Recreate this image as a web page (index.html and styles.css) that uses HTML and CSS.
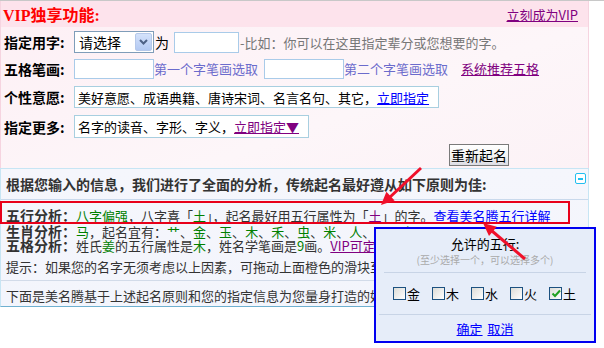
FILE: index.html
```html
<!DOCTYPE html>
<html lang="zh-CN">
  <head>
    <meta charset="UTF-8" />
    <title>VIP独享功能</title>
    <link rel="stylesheet" href="styles.css">
  </head>
  <body>
    <div class="topline"></div>
    <div class="page">
      <div class="vip">
        <div class="vip-head">
          <span class="vip-title">VIP独享功能:</span>
          <a class="purple" href="#">立刻成为VIP</a>
        </div>
        <div class="vip-body">
          <div class="row r1">
            <span class="lbl">指定用字:</span>
            <div class="sel">
              <span>请选择</span>
              <span class="sel-btn">
                <svg width="9" height="6" viewBox="0 0 9 6"><path d="M1 1l3.5 3.5L8 1" fill="none" stroke="#4d6185" stroke-width="2"/></svg>
              </span>
            </div>
            <span class="wei">为</span>
            <span class="inp w64"></span>
            <span class="hint">-比如：你可以在这里指定辈分或您想要的字。</span>
          </div>
          <div class="row r2">
            <span class="lbl">五格笔画:</span>
            <span class="inp w80"></span>
            <span class="blue-tip">第一个字笔画选取</span>
            <span class="inp w80 gap6"></span>
            <span class="blue-tip">第二个字笔画选取</span>
            <a class="purple gap13" href="#">系统推荐五格</a>
          </div>
          <div class="row r3">
            <span class="lbl">个性意愿:</span>
            <div class="box b364">美好意愿、成语典籍、唐诗宋词、名言名句、其它，<a class="blue" href="#">立即指定</a></div>
          </div>
          <div class="row r4">
            <span class="lbl">指定更多:</span>
            <div class="box b234">名字的读音、字形、字义，<a class="purple" href="#">立即指定▼</a></div>
          </div>
          <div class="row r5">
            <span class="btn">重新起名</span>
          </div>
        </div>
      </div>

      <div class="result">
        <div class="result-head">
          <span class="result-title">根据您输入的信息，我们进行了全面的分析，传统起名最好遵从如下原则为佳:</span>
          <span class="fold"></span>
        </div>
        <div class="line l1"><b>五行分析：</b><em>八字偏强</em>，八字喜「<em>土</em>」，起名最好用五行属性为「<a class="purple" href="#">土</a>」的字。<a class="blue" href="#">查看美名腾五行详解</a></div>
        <div class="line l2"><b>生肖分析：</b><em>马</em>，起名宜有：<em>艹</em>、<em>金</em>、<em>玉</em>、<em>木</em>、<em>禾</em>、<em>虫</em>、<em>米</em>、<em>人</em>、<em>豆</em>、<em>土</em></div>
        <div class="line l3"><b>五格分析：</b>姓氏<em>姜</em>的五行属性是<em>木</em>，姓名学笔画是<em>9</em>画。<a class="purple" href="#">VIP可定</a></div>
        <div class="line l4">提示：如果您的名字无须考虑以上因素，可拖动上面橙色的滑块至</div>
        <div class="line l5">下面是美名腾基于上述起名原则和您的指定信息为您量身打造的好</div>
      </div>

      <div class="mark"></div>

      <div class="popup">
        <div class="pop-title">允许的五行:</div>
        <div class="pop-sub">(至少选择一个，可以选择多个)</div>
        <div class="pop-checks">
          <label class="ck"><span class="cb"></span>金</label>
          <label class="ck"><span class="cb"></span>木</label>
          <label class="ck"><span class="cb"></span>水</label>
          <label class="ck"><span class="cb"></span>火</label>
          <label class="ck"><span class="cb on"><svg width="10" height="9" viewBox="0 0 10 9"><path d="M1.5 4.5l2.5 2.5 5-5.5" fill="none" stroke="#21a121" stroke-width="2"/></svg></span>土</label>
        </div>
        <div class="pop-foot">
          <a class="blue" href="#">确定</a>
          <a class="blue" href="#">取消</a>
        </div>
      </div>

      <svg class="arrows" width="604" height="348" viewBox="0 0 604 348">
        <line x1="421" y1="168" x2="389" y2="198" stroke="#f0102a" stroke-width="3"/>
        <polygon points="381,205 394.6,200.6 386.4,191.8" fill="#f0102a"/>
        <line x1="525" y1="259" x2="492" y2="231" stroke="#f0102a" stroke-width="3"/>
        <polygon points="483,223 496.8,226.8 489,236" fill="#f0102a"/>
      </svg>
    </div>
  </body>
</html>
```

FILE: styles.css
```css
* {
  margin: 0;
  padding: 0;
  box-sizing: border-box;
}
html,
body {
  background: #fff;
  font: 13px "Noto Sans CJK SC", "DejaVu Sans", sans-serif;
  color: #000;
}
body {
  height: 348px;
  overflow: hidden;
}
a {
  text-decoration: underline;
}
.topline {
  height: 1px;
  background: #c8c8c8;
}
.page {
  position: relative;
  width: 589px;
}
.purple {
  color: #800080;
}
.blue {
  color: #0000ff;
}

/* vip panel */
.vip {
  border-left: 1px solid #f6d4e0;
  border-right: 1px solid #f6d4e0;
}
.vip-head {
  height: 26px;
  background: #fde3ec;
  display: flex;
  align-items: center;
  justify-content: space-between;
  padding: 0 10px 0 2px;
}
.vip-title {
  color: #f00;
  font: bold 16px "Liberation Serif", "Noto Sans CJK SC", serif;
}
.vip-body {
  height: 141px;
  padding-top: 4px;
  background: linear-gradient(160deg, #fdf0f5 0%, #fdf6f9 60%, #fcf2f6 100%);
}
.row {
  display: flex;
  align-items: center;
  white-space: nowrap;
}
.r1 {
  height: 22px;
}
.r2 {
  height: 21px;
  margin-top: 5px;
}
.r3 {
  height: 22px;
  margin-top: 7px;
}
.r4 {
  height: 23px;
  margin-top: 7px;
}
.r5 {
  height: 22px;
  margin-top: 6px;
  padding-left: 448px;
}
.lbl {
  width: 73px;
  padding-left: 3px;
  font-weight: bold;
  font-size: 14px;
}
.sel {
  width: 80px;
  height: 22px;
  border: 1px solid #7f9db9;
  background: #fff;
  display: flex;
  align-items: center;
  justify-content: space-between;
  padding: 0 1px 0 4px;
  font-size: 14px;
}
.sel-btn {
  width: 17px;
  height: 18px;
  border: 1px solid #b5c8ea;
  border-radius: 2px;
  background: linear-gradient(#d4e2fb, #b3c9f2);
  display: flex;
  align-items: center;
  justify-content: center;
}
.wei {
  margin-left: 1px;
  font-size: 14px;
}
.inp {
  display: inline-block;
  height: 21px;
  border: 1px solid #a9cbe9;
  background: #fff;
}
.r2 .inp {
  height: 20px;
}
.w64 {
  width: 65px;
  margin-left: 5px;
}
.w80 {
  width: 80px;
}
.gap6 {
  margin-left: 6px;
}
.gap13 {
  margin-left: 13px;
}
.hint {
  color: #777;
  margin-left: 1px;
}
.blue-tip {
  color: #6b6bcc;
}
.box {
  height: 100%;
  border: 1px solid #a8cfe0;
  background: #fff;
  padding-left: 3px;
  display: flex;
  align-items: center;
}
.b364 {
  width: 365px;
}
.b234 {
  width: 235px;
}
.btn {
  width: 60px;
  height: 22px;
  border: 1px solid #7a7a7a;
  background: linear-gradient(#fff, #f3f3f3 60%, #dcdce4);
  font-size: 14px;
  display: flex;
  align-items: center;
  justify-content: center;
}

/* analysis panel */
.result {
  border: 1px solid #c7e5f4;
  border-bottom-color: #6fb0d0;
  background: linear-gradient(180deg, #f5f6fc, #f3f5fc);
  height: 139px;
  color: #333;
  white-space: nowrap;
}
.result-head {
  display: flex;
  justify-content: space-between;
  padding: 7px 2px 0 5px;
  height: 31px;
  border-bottom: 1px solid #c9d9ec;
}
.result-title {
  font-weight: bold;
  font-size: 14px;
  line-height: 16px;
}
.fold {
  width: 11px;
  height: 11px;
  margin-top: -3px;
  border: 1px solid #22bff0;
  border-radius: 2px;
  background: #fff;
  position: relative;
}
.fold::after {
  content: "";
  position: absolute;
  left: 2px;
  top: 4px;
  width: 5px;
  height: 2px;
  background: #22bff0;
}
.line {
  padding-left: 5px;
  line-height: 15px;
}
.line b {
  font-weight: bold;
  font-size: 14px;
}
.line em {
  font-style: normal;
  color: #008000;
}
.l1 {
  margin-top: 7px;
  line-height: 16px;
}
.l3 {
  margin-top: -1px;
}
.l4 {
  margin-top: 6px;
  padding-bottom: 6px;
  border-bottom: 1px solid #d2dbe9;
}
.l5 {
  margin-top: 7px;
}

/* red outline around 五行分析 */
.mark {
  position: absolute;
  left: 0;
  top: 200px;
  width: 570px;
  height: 23px;
  border: 2px solid #e8001a;
}

/* popup */
.popup {
  position: absolute;
  left: 374px;
  top: 226px;
  width: 222px;
  height: 116px;
  border: 2px solid #0000f0;
  background: #e6edf9;
  text-align: center;
  padding: 0 3px;
}
.pop-title {
  margin-top: 7px;
  line-height: 16px;
}
.pop-sub {
  font-size: 10px;
  color: #aaa;
  line-height: 14px;
  margin: 1px 5px 0;
  padding-bottom: 5px;
  border-bottom: 1px solid #c8d4e6;
}
.pop-checks {
  display: flex;
  gap: 12px;
  padding: 10px 0 0 14px;
  height: 42px;
  border-bottom: 1px solid #c8d4e6;
}
.ck {
  display: flex;
  align-items: center;
  height: 20px;
}
.cb {
  width: 13px;
  height: 13px;
  border: 1px solid #1c5180;
  background: linear-gradient(135deg, #dcdcd7, #fff);
  margin-right: 1px;
  display: flex;
  align-items: center;
  justify-content: center;
}
.pop-foot {
  padding-top: 6px;
  line-height: 16px;
}
.pop-foot a {
  margin: 0 1px;
}

.arrows {
  position: absolute;
  left: 0;
  top: -1px;
  pointer-events: none;
}
```
